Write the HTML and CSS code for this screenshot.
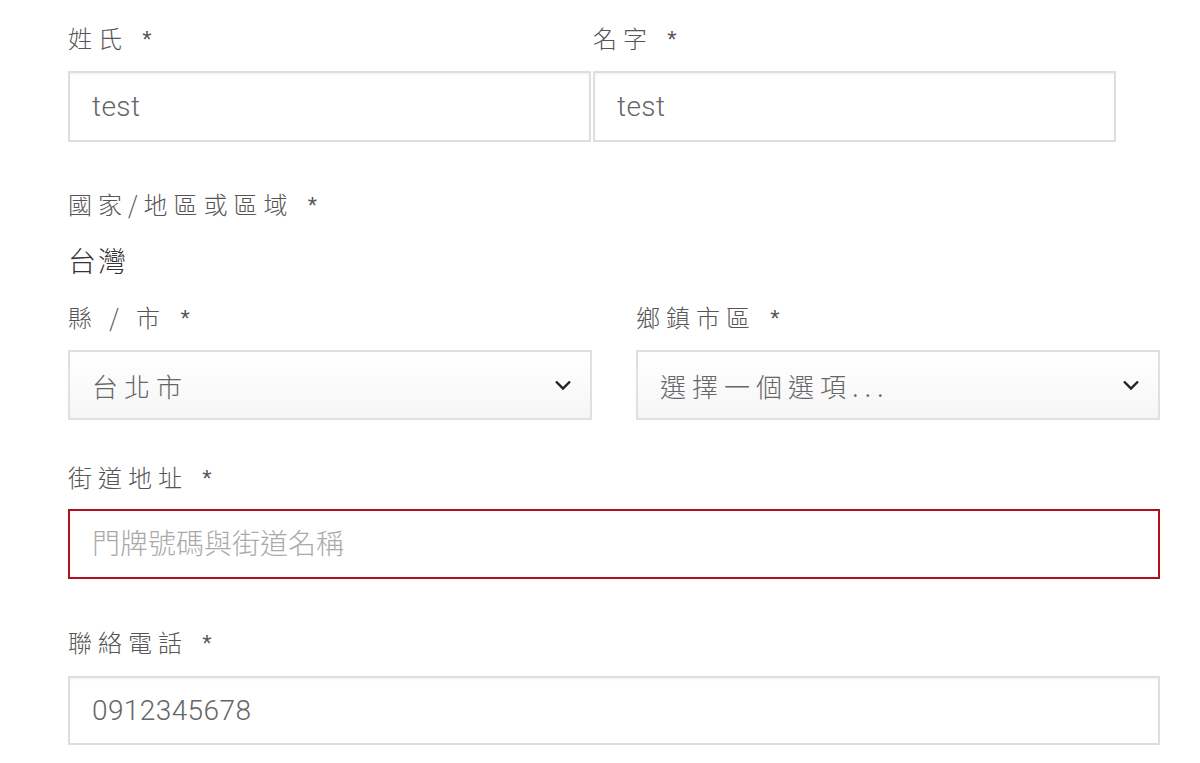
FILE: index.html
```html
<!DOCTYPE html>
<html lang="zh-Hant">
<head>
  <meta charset="UTF-8">
  <title>帳單地址</title>
<link rel="stylesheet" href="styles.css">
</head>
<body>

<form class="billing" action="#" method="POST">

  <!-- NAME -->
  <div class="row row-name">
    <p class="field">
      <label class="lbl" for="last_name">姓氏 <span class="req">*</span></label>
      <input class="txt" type="text" id="last_name" value="test">
    </p>
    <p class="field">
      <label class="lbl" for="first_name">名字 <span class="req">*</span></label>
      <input class="txt" type="text" id="first_name" value="test">
    </p>
  </div>

  <!-- COUNTRY -->
  <p class="field field-country">
    <label class="lbl">國家/地區或區域 <span class="req">*</span></label>
    <strong class="country">台灣</strong>
  </p>

  <!-- CITY / DISTRICT -->
  <div class="row row-city">
    <p class="field">
      <label class="lbl" for="state">縣 / 市 <span class="req">*</span></label>
      <span class="sel-wrap">
        <select class="sel" id="state">
          <option>台北市</option>
        </select>
        <svg class="chev" width="18" height="12" viewBox="0 0 18 12"><path d="M2 2.5 L9 9.5 L16 2.5" fill="none" stroke="#222" stroke-width="2.4"/></svg>
      </span>
    </p>
    <p class="field">
      <label class="lbl" for="city">鄉鎮市區 <span class="req">*</span></label>
      <span class="sel-wrap">
        <select class="sel" id="city">
          <option>選擇一個選項...</option>
        </select>
        <svg class="chev" width="18" height="12" viewBox="0 0 18 12"><path d="M2 2.5 L9 9.5 L16 2.5" fill="none" stroke="#222" stroke-width="2.4"/></svg>
      </span>
    </p>
  </div>

  <!-- STREET -->
  <p class="field field-street">
    <label class="lbl" for="address_1">街道地址 <span class="req">*</span></label>
    <input class="txt txt-invalid" type="text" id="address_1" placeholder="門牌號碼與街道名稱">
  </p>

  <!-- PHONE -->
  <p class="field field-phone">
    <label class="lbl" for="phone">聯絡電話 <span class="req">*</span></label>
    <input class="txt txt-phone" type="tel" id="phone" value="0912345678">
  </p>

</form>

</body>
</html>
```

FILE: styles.css
```css
body {
    margin: 0;
    background: #fff;
    font-family: "Noto Sans CJK TC", "Noto Sans", sans-serif;
    color: #555;
}

.billing {
    width: 1092px;
    margin-left: 68px;
    padding-top: 22px;
}

.field {
    margin: 0;
}

.row {
    display: grid;
}

.row-name {
    grid-template-columns: 523px 523px;
    column-gap: 2px;
}

.row-city {
    grid-template-columns: 524px 524px;
    column-gap: 44px;
    margin-top: 25px;
}

.lbl {
    display: block;
    font-size: 24px;
    line-height: 32px;
    font-weight: 300;
    letter-spacing: 6px;
    color: #555;
}

.req {
    margin-left: 3px;
    font-family: "Liberation Sans", sans-serif;
    color: #555;
}

.txt {
    display: block;
    width: 100%;
    height: 71px;
    margin-top: 15px;
    padding: 0 22px;
    box-sizing: border-box;
    border: 2px solid #dedede;
    border-radius: 0;
    background: #fff;
    box-shadow: inset 0 2px 2px rgba(0, 0, 0, 0.04);
    font-family: "Roboto", "Noto Sans CJK TC", sans-serif;
    font-size: 28px;
    font-weight: 300;
    letter-spacing: 0.4px;
    color: #666;
    outline: none;
}

.txt::placeholder {
    font-family: "Noto Sans CJK TC", sans-serif;
    font-weight: 300;
    font-size: 28px;
    letter-spacing: 0;
    color: #aaa;
}

.field-country {
    margin-top: 46px;
}

.country {
    display: block;
    margin-top: 22px;
    font-size: 28px;
    line-height: 32px;
    font-weight: 300;
    color: #333;
    letter-spacing: 2px;
}

.sel-wrap {
    position: relative;
    display: block;
    margin-top: 15px;
}

.sel {
    display: block;
    width: 100%;
    height: 70px;
    padding: 0 60px 0 22px;
    box-sizing: border-box;
    border: 2px solid #e0e0e0;
    border-radius: 0;
    background: linear-gradient(#fff, #f6f6f6);
    -webkit-appearance: none;
    appearance: none;
    font-family: "Noto Sans CJK TC", sans-serif;
    font-size: 26px;
    font-weight: 300;
    letter-spacing: 6px;
    color: #666;
    outline: none;
}

.chev {
    position: absolute;
    right: 20px;
    top: 29px;
}

.field-street {
    margin-top: 41px;
}

.txt-invalid {
    height: 70px;
    margin-top: 14px;
    border-color: #b0101e;
    box-shadow: none;
}

.field-phone {
    margin-top: 47px;
}

.txt-phone {
    height: 69px;
    margin-top: 16px;
}
```
